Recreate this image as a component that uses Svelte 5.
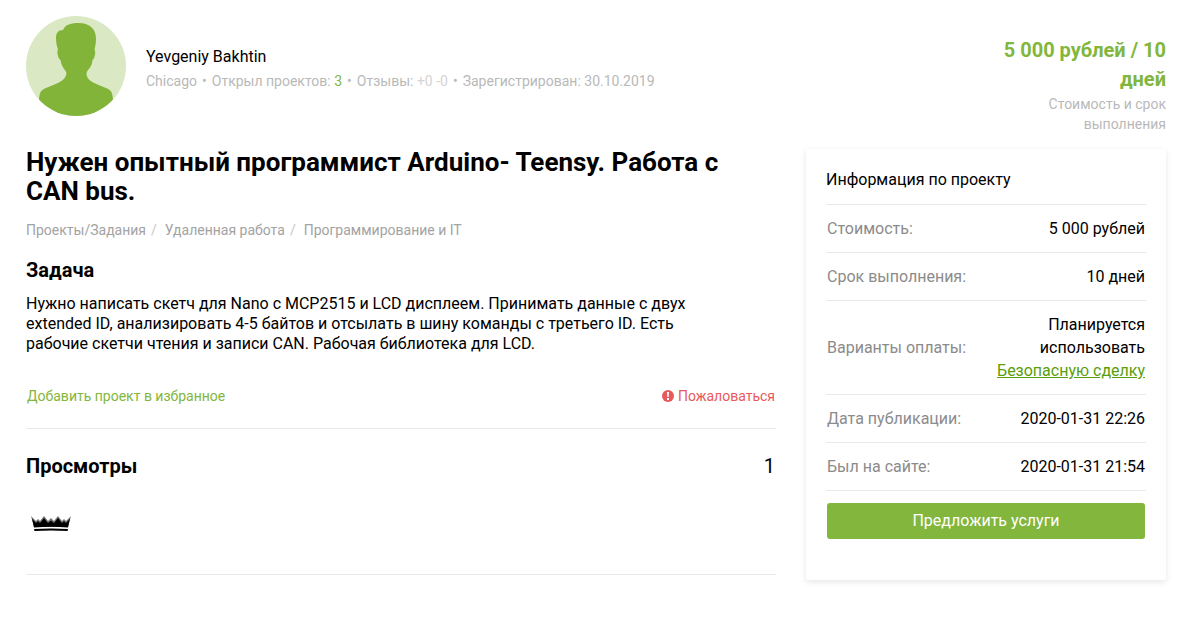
<script lang="ts">
  type InfoRow = { label: string; value: string; link?: string };

  const crumbs = ['Проекты/Задания', 'Удаленная работа', 'Программирование и IT'];

  const info: InfoRow[] = [
    { label: 'Стоимость', value: '5 000 рублей' },
    { label: 'Срок выполнения', value: '10 дней' },
    { label: 'Варианты оплаты', value: 'Планируется использовать', link: 'Безопасную сделку' },
    { label: 'Дата публикации', value: '2020-01-31 22:26' },
    { label: 'Был на сайте', value: '2020-01-31 21:54' },
  ];
</script>

<div class="page">
  <header>
    <svg class="avatar" viewBox="0 0 100 100" aria-hidden="true">
      <clipPath id="avatar-clip"><circle cx="50" cy="50" r="50" /></clipPath>
      <g clip-path="url(#avatar-clip)">
        <rect width="100" height="100" fill="#dae8c4" />
        <path fill="#83b43a" d="M37 14C39 9 44 7 52 7C64 7 70 13 70 23C70 28 69 31 68.500 34C70 34 69 43 66.500 44C66 51 62 53 60.500 57C60 65 70 68 80 72C85 74 87 76 87 86V100H13V86C13 76 15 74 20 72C30 68 40 65 40.500 57C39 53 35.500 51 34.500 44C32 43 30.500 34 32 34C31 31 30 27 30 22C30 17 32 14 37 14Z" />
      </g>
    </svg>
    <div class="author">
      <p class="name">Yevgeniy Bakhtin</p>
      <ul class="meta">
        <li>Chicago</li>
        <li>Открыл проектов: <a href="#projects">3</a></li>
        <li>Отзывы: <span class="votes">+0 -0</span></li>
        <li>Зарегистрирован: 30.10.2019</li>
      </ul>
    </div>
    <div class="price">
      <strong>5 000 рублей / 10 дней</strong>
      <p>Стоимость и срок выполнения</p>
    </div>
  </header>

  <div class="columns">
    <main>
      <h1>Нужен опытный программист Arduino- Teensy. Работа с CAN bus.</h1>
      <nav aria-label="Разделы">
        {#each crumbs as crumb}
          <a href="#section">{crumb}</a>
        {/each}
      </nav>
      <h2>Задача</h2>
      <p class="task">Нужно написать скетч для Nano с MCP2515 и LCD дисплеем. Принимать данные с двух extended ID, анализировать 4-5 байтов и отсылать в шину команды с третьего ID. Есть рабочие скетчи чтения и записи CAN. Рабочая библиотека для LCD.</p>
      <div class="actions">
        <a class="favorite" href="#favorite">Добавить проект в избранное</a>
        <a class="report" href="#report">
          <svg viewBox="0 0 12 12" aria-hidden="true">
            <circle cx="6" cy="6" r="6" fill="#e9595b" />
            <path fill="#fff" d="M5 2h2l-.3 5H5.300zM5 8h2v2H5z" />
          </svg>
          Пожаловаться
        </a>
      </div>
      <section class="views">
        <div class="views-head">
          <h2>Просмотры</h2>
          <span>1</span>
        </div>
        <a class="viewer" href="#viewer" aria-label="Посетитель">
          <svg viewBox="0 0 40 16" aria-hidden="true">
            <path fill="#777" d="M0 0L5 5L7 3L9 5L13 0L17 5L20 2L23 5L27 0L31 5L33 3L35 5L40 0L37 11H3Z" />
            <path d="M1 2.500L5 7L7 5L9 7L13 2L17 7L20 4.500L23 7L27 2L31 7L33 5L35 7L39 2.500L37 11.500Q20 10 3 11.500Z" />
            <path d="M3 13Q20 12 37 13L36.500 15Q20 14 3.500 15Z" />
          </svg>
        </a>
      </section>
    </main>

    <aside>
      <h3>Информация по проекту</h3>
      <table>
        <tbody>
          {#each info as row}
            <tr>
              <th scope="row">{row.label}:</th>
              <td>{row.value} {#if row.link}<a href="#safe-deal">{row.link}</a>{/if}</td>
            </tr>
          {/each}
        </tbody>
      </table>
      <button type="button">Предложить услуги</button>
    </aside>
  </div>
</div>

<style>
  :global(body) { margin: 0; background: #fff; }
  .page { padding: 16px 15px 56px 26px; color: #000; font: 16px/20px Roboto, sans-serif; }
  h1, h2, h3, p, ul { margin: 0; padding: 0; }
  a { color: inherit; text-decoration: none; }

  header { display: flex; align-items: flex-start; }
  .avatar { flex: 0 0 auto; width: 100px; height: 100px; }
  .author { flex: 1; min-width: 0; padding: 31px 0 0 20px; }
  .meta { display: flex; flex-wrap: wrap; margin-top: 4px; color: #b9b9b9; font-size: 14px; list-style: none; }
  .meta li + li::before { content: '•'; margin: 0 5px; }
  .meta a { color: #82b63c; }
  .votes { color: #d4d4d4; }
  .price { flex: 0 0 auto; width: 170px; padding-top: 20px; text-align: right; }
  .price strong { display: block; color: #82b63c; font-size: 20px; line-height: 29px; }
  .price p { color: #b9b9b9; font-size: 14px; }

  .columns { display: flex; align-items: flex-start; gap: 30px; margin-top: 14px; }
  main { flex: 1; min-width: 0; }
  h1 { font-size: 26px; font-weight: 700; line-height: 29px; }
  nav { display: flex; flex-wrap: wrap; margin-top: 14px; color: #a3a3a3; font-size: 14px; }
  nav a + a::before { content: '/'; margin: 0 8px 0 5px; color: #c8c8c8; }
  h2 { font-size: 20px; font-weight: 700; line-height: 24px; }
  nav + h2 { margin-top: 18px; }
  .task { margin-top: 12px; padding-right: 60px; }
  .actions { display: flex; justify-content: space-between; padding: 32px 1px 22px; border-bottom: 1px solid #e9e9e9; font-size: 14px; }
  .favorite { color: #82b63c; }
  .report { display: flex; align-items: center; gap: 4px; color: #e9595b; }
  .report svg { width: 12px; height: 12px; }
  .views { padding: 25px 0 42px; border-bottom: 1px solid #e9e9e9; }
  .views-head { display: flex; justify-content: space-between; padding-right: 1px; }
  .views-head span { font-size: 20px; line-height: 24px; }
  .viewer { display: block; width: 40px; margin: 38px 0 0 5px; }
  .viewer svg { display: block; width: 40px; height: 16px; }

  aside { flex: 0 0 360px; box-sizing: border-box; margin-top: 1px; padding: 21px 20px 41px; border-radius: 2px; box-shadow: 0 2px 6px rgba(0, 0, 0, .1); }
  h3 { margin-bottom: 14px; font-size: 16px; font-weight: 400; }
  table { width: 100%; border-collapse: collapse; line-height: 23px; }
  tr { border-top: 1px solid #e9e9e9; border-bottom: 1px solid #e9e9e9; }
  th, td { padding: 12px 1px; vertical-align: middle; }
  th { color: #8b8b8b; font-weight: 400; text-align: left; white-space: nowrap; }
  td { padding-left: 16px; text-align: right; }
  td a { color: #5a9e0c; text-decoration: underline; }
  button { display: block; width: calc(100% - 2px); height: 36px; margin: 12px 1px 0; padding: 0; border: 0; border-radius: 3px; background: #82b63c; color: #fff; font: inherit; cursor: pointer; }
</style>
